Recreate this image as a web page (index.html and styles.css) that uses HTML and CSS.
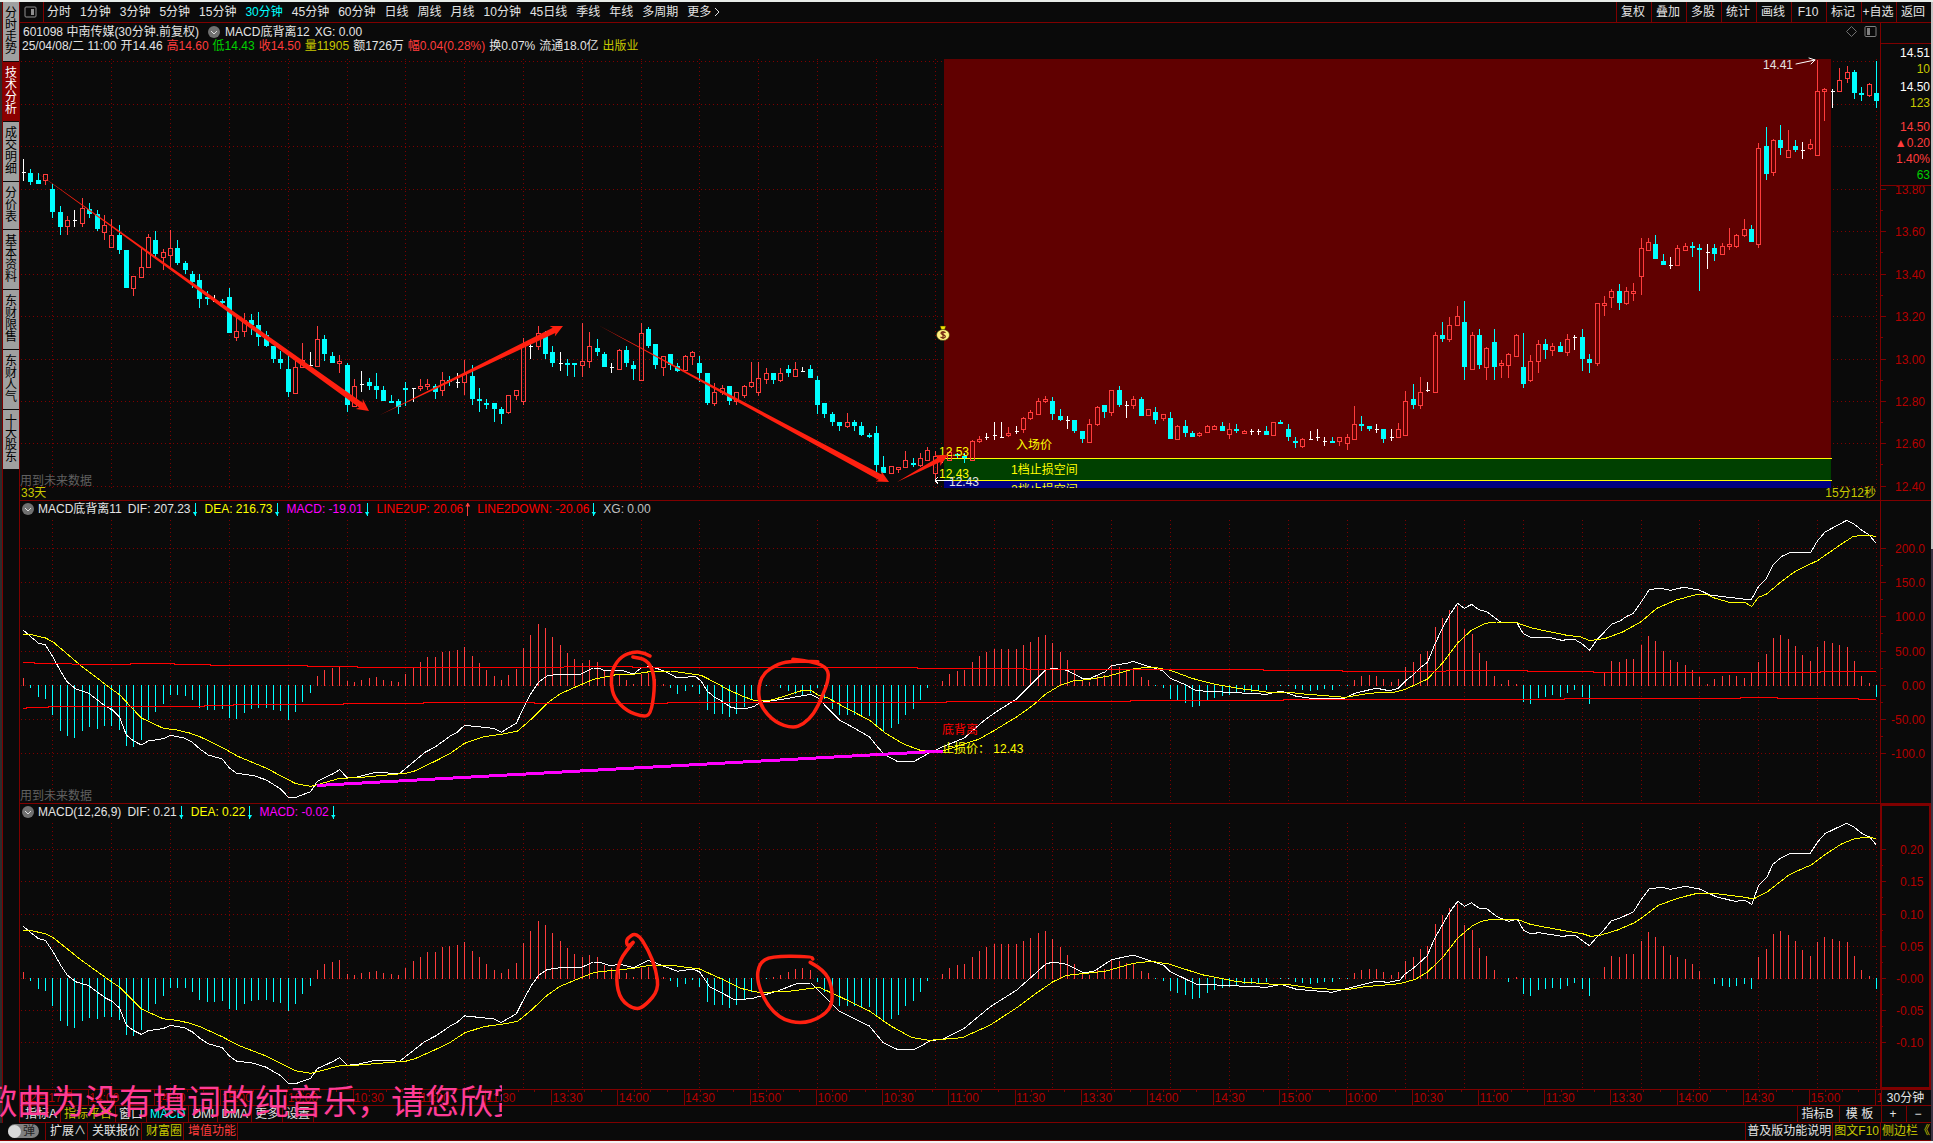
FILE: index.html
```html
<!DOCTYPE html>
<html lang="zh-CN">
<head>
<meta charset="utf-8">
<title>中南传媒 601098</title>
<link rel="stylesheet" href="styles.css">
</head>
<body>
<div class="app">
  <div class="workspace">
    <nav class="side">
      <button>分时走势</button>
      <button class="current">技术分析</button>
      <button>成交明细</button>
      <button>分价表</button>
      <button>基本资料</button>
      <button>东财限售</button>
      <button>东财人气</button>
      <button>十大股东</button>
    </nav>
    <main class="content">
      <header class="toolbar">
        <button class="layout-btn" aria-label="布局"><svg width="13" height="13" viewBox="0 0 13 13"><rect x="1" y="1" width="11" height="10" rx="1" fill="none" stroke="#909090"/><rect x="7" y="3" width="3" height="6" fill="#909090"/></svg></button>
        <div class="periods">
          <button>分时</button><button>1分钟</button><button>3分钟</button><button>5分钟</button><button>15分钟</button><button class="active">30分钟</button><button>45分钟</button><button>60分钟</button><button>日线</button><button>周线</button><button>月线</button><button>10分钟</button><button>45日线</button><button>季线</button><button>年线</button><button>多周期</button><button class="more">更多<svg width="6" height="10" viewBox="0 0 6 10"><path d="M1 1l4 4-4 4" fill="none" stroke="#e0e0e0"/></svg></button>
        </div>
        <div class="tools">
          <button>复权</button><button>叠加</button><button>多股</button><button>统计</button><button>画线</button><button>F10</button><button>标记</button><button>+自选</button><button>返回</button>
        </div>
      </header>

      <div class="panels">
        <section class="panel">
          <div class="plot-col">
            <div class="head head-main">
              <div class="line">
                <span>601098 中南传媒(30分钟.前复权)</span>
                <svg class="drop" viewBox="0 0 12 12"><circle cx="6" cy="6" r="6" fill="#707070"/><path d="M3 5l3 3 3-3" fill="none" stroke="#ddd"/></svg>
                <span>MACD底背离12</span><span>XG: 0.00</span>
                <span class="corner"><svg width="11" height="11" viewBox="0 0 11 11"><path d="M5.500.5l5 5-5 5-5-5z" fill="none" stroke="#707070"/></svg><svg width="13" height="12" viewBox="0 0 13 12"><rect x="1" y=".5" width="11" height="10" rx="1" fill="none" stroke="#808080"/><rect x="3" y="2" width="3" height="7" fill="#808080"/></svg></span>
              </div>
              <div class="line quote-line">
                <span>25/04/08/二 11:00</span><span>开14.46</span><span class="up">高14.60</span><span class="down">低14.43</span><span class="up">收14.50</span><span class="gold">量11905</span><span>额1726万</span><span class="up">幅0.04(0.28%)</span><span>换0.07%</span><span>流通18.0亿</span><span class="gold">出版业</span>
              </div>
            </div>
            <svg class="plot" id="price"></svg>
          </div>
          <div class="axis-col">
            <svg class="axis" id="price-axis"></svg>
            <div class="quotes">
              <div class="pair"><span>14.51</span><span class="gold">10</span></div>
              <div class="pair"><span>14.50</span><span class="gold">123</span></div>
              <div class="pair last"><span class="up">14.50</span><span class="up">▲0.20</span><span class="up">1.40%</span><span class="down">63</span></div>
            </div>
          </div>
        </section>

        <section class="panel">
          <div class="plot-col">
            <div class="head">
              <div class="line indicators">
                <svg class="drop" viewBox="0 0 12 12"><circle cx="6" cy="6" r="6" fill="#707070"/><path d="M3 5l3 3 3-3" fill="none" stroke="#ddd"/></svg>
                <span>MACD底背离11</span>
                <span>DIF: 207.23<i class="dn"></i></span><span class="dea">DEA: 216.73<i class="dn"></i></span><span class="macd">MACD: -19.01<i class="dn"></i></span><span class="band">LINE2UP: 20.06<i class="rise"></i></span><span class="band">LINE2DOWN: -20.06<i class="dn"></i></span><span class="dim">XG: 0.00</span>
              </div>
            </div>
            <svg class="plot" id="macd-a"></svg>
          </div>
          <div class="axis-col"><svg class="axis" id="macd-a-axis"></svg></div>
        </section>

        <section class="panel">
          <div class="plot-col">
            <div class="head">
              <div class="line indicators">
                <svg class="drop" viewBox="0 0 12 12"><circle cx="6" cy="6" r="6" fill="#707070"/><path d="M3 5l3 3 3-3" fill="none" stroke="#ddd"/></svg>
                <span>MACD(12,26,9)</span>
                <span>DIF: 0.21<i class="dn"></i></span><span class="dea">DEA: 0.22<i class="dn"></i></span><span class="macd">MACD: -0.02<i class="dn"></i></span>
              </div>
            </div>
            <svg class="plot" id="macd-b"></svg>
          </div>
          <div class="axis-col selected"><svg class="axis" id="macd-b-axis"></svg></div>
        </section>
      </div>

      <div class="time-row">
        <svg class="times" id="times"></svg>
        <button class="period-label">30分钟</button>
      </div>

      <div class="tabs">
        <div class="tab-set">
          <button>指标A</button><button class="gold">指标平台</button><button>窗口</button><button class="active">MACD</button><button>DMI</button><button>DMA</button><button>更多</button><button>设置</button>
        </div>
        <div class="tab-end"><button>指标B</button><button>模 板</button><button class="zoom">+</button><button class="zoom">−</button></div>
      </div>
    </main>
  </div>

  <footer class="status">
    <button class="toggle" aria-label="弹幕"><span class="knob"></span>弹</button>
    <div class="status-set"><button>扩展∧</button><button>关联报价</button><button class="gold">财富圈</button><button class="up">增值功能</button></div>
    <div class="status-end"><a href="#">普及版功能说明</a><a href="#" class="gold">图文F10</a><a href="#" class="gold">侧边栏《</a></div>
  </footer>
  <div class="lyric"><span>歌曲为没有填词的纯音乐，请您欣赏</span></div>
</div>
<script src="charts.js"></script>
</body>
</html>
```
FILE: styles.css
```css
* { box-sizing: border-box; }
body {
  margin: 0;
  background: #0a0a0a;
  color: #e4e4e4;
  font: 12px/14px "Liberation Sans", "Noto Sans CJK SC", sans-serif;
}
button {
  margin: 0;
  padding: 0;
  border: 0;
  background: none;
  color: inherit;
  font: inherit;
  white-space: nowrap;
  cursor: pointer;
}
a { color: inherit; text-decoration: none; }
svg { display: block; }
.gold { color: #c8c800; }
.up { color: #ff3c3c; }
.down { color: #00d000; }

.app {
  position: relative;
  display: flex;
  flex-direction: column;
  min-height: 100vh;
  border-top: 2px solid #e8ece8;
  border-bottom: 2px solid #f4f4f4;
}
.app::after {
  content: "";
  position: absolute;
  top: 0;
  right: 0;
  bottom: 0;
  width: 2px;
  background: linear-gradient(#c4c4c4 48%, #3c3444 48%);
}
.workspace { flex: 1; display: grid; grid-template-columns: 20px minmax(0, 1fr); }

.side {
  display: flex;
  flex-direction: column;
  border-left: 2px solid #2c2c2c;
  border-right: 1px solid #7f0000;
  box-shadow: inset 1px 0 #7f0000;
  padding-left: 1px;
}
.side button {
  padding: 5px 2px 6px;
  border-bottom: 1px solid #0a0a0a;
  background: #a0a0a0;
  color: #000;
  line-height: 12px;
  white-space: normal;
  word-break: break-all;
}
.side .current { background: #8b0000; color: #fff; }

.content { display: flex; flex-direction: column; min-width: 0; padding-right: 2px; }
.toolbar { display: flex; height: 21px; border-bottom: 1px solid #7f0000; }
.layout-btn { width: 24px; padding-left: 4px; border-right: 1px solid #7f0000; }
.periods { flex: 1; display: flex; gap: 9px; padding-left: 3px; }
.periods .active { color: #00ffff; }
.more { display: flex; align-items: center; gap: 3px; }
.tools { display: flex; }
.tools button { width: 35px; padding-right: 2px; border-left: 1px solid #7f0000; }

.panels { flex: 1; display: grid; grid-template-rows: 478fr 303fr 286fr; }
.panel {
  display: grid;
  grid-template-columns: minmax(0, 1fr) 51px;
  min-height: 0;
  border-bottom: 1px solid #7f0000;
}
.plot-col { display: flex; flex-direction: column; min-width: 0; }
.axis-col { position: relative; border-left: 1px solid #7f0000; }
.axis-col.selected { border: 2px solid #7f0000; }
.head { padding-top: 1px; }
.head-main { padding-top: 2px; }
.line { display: flex; align-items: center; height: 14px; gap: 5px; padding-left: 3px; white-space: nowrap; }
.quote-line { gap: 4px; padding-left: 2px; }
.drop { width: 12px; height: 12px; margin-left: 4px; }
.corner { display: flex; gap: 7px; margin-left: auto; padding-right: 3px; }
.indicators { gap: 6px; padding-left: 2px; }
.indicators .drop { margin: 0 -2px 0 0; }
.indicators span { display: flex; align-items: center; gap: 1px; }
.indicators i { position: relative; width: 7px; height: 13px; color: #00ffff; background: linear-gradient(currentColor, currentColor) 3px 0 / 1px 13px no-repeat; }
.indicators i::after { content: ""; position: absolute; left: 1px; bottom: 0; width: 5px; height: 4px; background: currentColor; clip-path: polygon(0 0, 100% 0, 50% 100%); }
.indicators .rise { color: #ff3c3c; }
.indicators .rise::after { top: 0; bottom: auto; clip-path: polygon(50% 0, 100% 100%, 0 100%); }
.indicators .dea { color: #ffff00; }
.indicators .macd { color: #ff00ff; }
.indicators .band { color: #ff0000; }
.indicators .dim { color: #c0c0c0; }
.plot { flex: 1; width: 100%; height: 0; min-height: 0; }
.axis { width: 100%; height: 0; min-height: 100%; }
.quotes {
  position: absolute;
  inset: 0 0 auto 0;
  padding: 22px 1px 2px 0;
  border-bottom: 1px solid #7f0000;
  background: linear-gradient(#7f0000, #7f0000) 0 20px / 100% 1px no-repeat #0a0a0a;
  color: #fff;
  line-height: 16px;
  text-align: right;
}
.pair { display: flex; flex-direction: column; margin-bottom: 2px; }
.pair.last { margin: 8px 0 0; }

.time-row { display: grid; grid-template-columns: minmax(0, 1fr) 50px; height: 16px; border-bottom: 1px solid #7f0000; }
.times { width: 100%; height: 15px; }
.period-label { padding-right: 2px; border-left: 1px solid #7f0000; }
.tabs { display: flex; justify-content: space-between; height: 17px; border-bottom: 1px solid #7f0000; }
.tab-set, .tab-end, .status-set, .status-end { display: flex; }
.tab-set { padding-left: 2px; }
.tab-set button { padding: 0 3px; border-right: 1px solid #7f0000; }
.tab-set .active { color: #00ffff; }
.tab-end button { width: 42px; padding-right: 2px; border-left: 1px solid #7f0000; }
.tab-end .zoom { width: 25px; }

.status { display: flex; align-items: stretch; height: 18px; padding-right: 2px; border-bottom: 1px solid #7f0000; line-height: 17px; }
.toggle { display: flex; align-items: center; justify-content: space-between; width: 31px; height: 14px; margin: 1px 6px 0 8px; padding-right: 4px; border-radius: 7px; background: #808080; color: #222; }
.knob { width: 13px; height: 13px; border-radius: 50%; background: #d8d8d8; }
.status-set { flex: 1; border-left: 1px solid #7f0000; }
.status-set button { padding: 0 1px 0 4px; border-right: 1px solid #7f0000; }
.status-end a { padding: 0 1px; border-left: 1px solid #7f0000; }

.lyric {
  position: absolute;
  left: 0;
  bottom: 20px;
  width: 502px;
  height: 42px;
  overflow: hidden;
  color: #ff3c96;
  font: 400 34px/42px "Noto Sans CJK SC", sans-serif;
  white-space: nowrap;
  pointer-events: none;
}
.lyric span { margin-left: -17px; }

.plot text, .axis text, .times text { font: 12px "Liberation Sans", "Noto Sans CJK SC", sans-serif; }
```
FILE: charts.js
```js
// Series values are stored in thirds of a chart unit, relative to each block's base line.
const RED = '#ff3c3c', CYAN = '#00ffff', GRID = '#7f0000', PEN = '#ff2010', BG = '#0a0a0a';
const BAR_X = i => 23.5 + 7.353 * i;

// type, high, body top, body bottom, low  (r = rising, c = falling, w = unchanged)
const CANDLES = [
  [0, 'w477 517 517 545|c507 521 546 557|c521 540 552 552|r522 522 542 557|c552 567 636 654|c618 636 681 705|r650 660 678 705|w630 662 662 681|r594 625 671 681|c609 629 642 654|c630 642 687 693|r645 676 696 720|r657 706 741 741|c675 705 750 762|c750 750 864 864|r828 828 866 890|r744 801 831 831|r702 711 803 803|c693 720 762 775|r747 756 773 812|r690 744 765 805|c720 744 789 795|c783 789 812 822|c813 822 846 864|c822 840 897 924|c873 892 897 915|w885 903 903 908|c897 903 909 921|c864 891 999 999|r948 993 1013 1025|r939 960 995 1011|c942 960 975 1005|c936 975 1011 1038|c993 1005 1038 1043|c1038 1038 1077 1089|c1055 1077 1089 1107|c1066 1107 1176 1191|r1070 1102 1179 1179|r1029 1080 1103 1103|w1056 1096 1096 1100|r978 1018 1098 1101|c1005 1017 1062 1083|c1056 1068 1089 1089|r1065 1083 1091 1119|c1089 1095 1215 1236|r1137 1158 1218 1221|w1113 1153 1153 1176|c1134 1146 1158 1170|c1119 1158 1170 1197|c1158 1170 1203 1203|c1185 1203 1209 1209|c1197 1203 1221 1243'],
  [280, 'c306 324 330 380|w325 325 325 368|r297 319 325 334|r297 313 319 331|c313 319 336 357|r276 300 332 350|c288 300 306 318|w279 306 306 324|r240 282 308 346|c255 288 357 375|c324 357 363 396|c357 369 375 387|c369 369 387 426|c381 387 402 432|r345 346 398 402|r331 331 347 362|r174 198 365 375|w190 199 199 237|r138 160 200 210|c153 160 222 237|c198 216 249 261|w216 250 250 273|c237 249 255 288|c249 249 255 293|r129 244 257 293|r156 199 245 266|c178 204 216 228|c216 222 261 261|w249 262 262 279|r207 210 269 272|c198 210 249 261|c243 255 267 300|r129 160 302 302|c141 147 198 204|c192 192 255 267|r228 229 263 288|c222 222 255 272|c249 258 273 278|r225 229 270 272|r213 217 230 255|c228 249 279 306|c279 279 369 375|r309 336 371 380|r315 324 338 345|c318 318 363 375|r336 336 365 375|r315 319 347 356|r246 307 320 324|r246 295 338 350|r264 279 297 312|c279 279 300 312|r264 280 302 306|c255 267 279 293|r246 268 290 290|w261 274 274 276|c255 267 294 294|c288 300 375 402|c369 369 402 414|c396 402 426 438|c426 426 438 453|r399 426 440 446|c420 426 438 453|c426 438 465 470|c459 465 471 476|c438 459 555 579|c528 561 579 579|r558 560 580 580|r562 562 569 579|r513 541 563 563|c534 549 555 561|r519 535 557 561|r501 511 542 545|r513 530 580 600'],
  [300, 'w470 470 470 489|r455 457 482 482|c459 463 468 474|c459 468 475 489|r420 423 482 482|r408 418 425 431|w399 412 412 422|w366 406 406 422|w366 412 412 412|r381 401 407 412|w378 394 394 404|r351 354 389 399|r330 337 356 360|r294 304 344 344|r288 297 304 309|c291 303 342 360|c327 348 360 365|w348 360 360 387|c360 360 393 399|c393 393 417 430|r357 373 426 430|r318 321 374 378|c315 315 336 354|r270 270 338 348|c258 270 315 321|w303 316 316 354|r288 297 317 327|c291 297 348 348|r327 328 346 348|c321 336 360 372|r342 342 356 365|c336 354 417 417|r375 379 419 419|c360 378 399 411|c393 399 411 411|r396 400 407 411|r375 379 396 399|r375 379 389 389|c366 378 393 393|r369 387 402 417|c372 387 393 399|r390 394 401 404|w387 395 395 405|w387 395 395 405|c378 393 405 405|r366 367 407 407|c360 366 372 372|c372 387 411 423|c411 423 429 444|r414 418 440 444|w393 418 418 419|w387 412 412 424|w411 424 424 438|c411 423 429 429|r411 412 425 438|r402 412 431 450|r318 373 419 419|c348 372 378 393|c378 378 387 393|w372 387 387 399|c387 387 417 429|w387 412 412 424|r369 388 413 413|r273 304 407 407|c252 297 315 327|r231 277 317 327|w246 271 271 276|r96 105 278 278'],
  [40, 'c846 885 897 906|r831 856 899 906|r798 828 857 857|c783 846 981 1020|r876 885 989 989|c867 885 975 987|r921 925 983 1020|c867 906 981 1020|r960 970 977 1014|r939 943 977 1014|r882 885 950 950|c879 981 1032 1044|r945 964 1022 1026|r900 913 965 999|c897 912 930 957|r909 919 932 948|c906 918 936 936|r882 898 938 948|w885 892 892 930|c867 891 957 993|c942 957 969 999|r790 790 971 980|r768 790 797 828|r747 754 773 804|c732 753 789 810|r741 754 791 795|r729 754 761 783|r594 625 710 765|r594 607 632 632|c585 612 657 657|c642 663 675 675|w651 676 676 687|r615 625 677 677|r609 619 632 632|c606 618 624 651|c612 624 630 753|w612 637 637 687|c612 624 642 663|r609 619 644 644|r564 613 620 630|r582 586 620 624|r537 568 587 591|c555 567 606 606|r309 325 614 624|c261 318 402 420|r297 301 398 408|c255 300 324 345|r270 331 353 353|c300 318 330 336|w306 331 331 357|r297 313 326 330|r60 154 347 347|r144 148 155 243|w147 154 154 204|r84 121 155 155|r78 97 116 131|c90 96 159 177|c141 159 165 183|r129 133 167 171|c63 159 183 204']
];

// zero level, bar tips
const BARS = [
  [616, '597 627 654 660 708 756 771 777 756 744 750 741 741 753 801 804 783 723 699 675 648 648 651 663 687 693 693 690 717 720 702 690 687 687 693 696 723 699 669 642 591 573 567 560 606 609 603 597 594 603 606 609 585 564 549 534 534 519 516 513 504 531 552 573 591 603 588 570 507 468 435 447 474 498 522 540 552 543 549 576'],
  [256, '225 228 243 254 225 222 240 254 267 285 276 264 285 333 345 345 354 345 324 303 285 261 256 267 276 285 288 282 267 300 330 348 348 348 351 351 378 395 387 375 348 330 303 267 256 246 225 216 213 189 171 159 150 150 150 150 138 129 114 108 132 159 183 213 246 249 231 228 201 204 210 210 234 243 260'],
  [106, '117 150 156 162 173 171 154 147 140 136 130 128 127 122 121 106 111 108 120 123 126 123 120 121 111 108 91 81 78 79'],
  [556, '540 549 540 504 489 465 456 384 357 333 321 390 405 462 486 531 555 543 555 609 615 597 594 588 594 582 573 594 615 556 522 486 489 480 480 438 411 426 456 483 489 498 513 534 555 540 531 528 531 537 522 489 465 417 408 420 441 468 486 444 426 432 438 444 486 531 552 594']
];

// blocks of [x origin, x scale, y origin, "x,y ..."]
const DIF_LEFT = [0, 2.376, 480, '55,450 74,471 91,489 108,495 127,534 145,576 160,606 180,627 210,639 250,678 267,690 284,711 300,765 318,783 336,795 352,783 388,776 405,766 438,774 457,787 475,807 495,825 528,837 545,864 562,880 603,887 633,900 667,927 686,953 703,952 738,935 754,904 790,882 807,869 825,893 845,892 890,878 950,880 1010,817 1035,800 1070,768 1085,758 1104,736 1172,745 1191,757 1227,729 1245,681 1262,640 1280,606 1300,588 1330,582 1380,582 1410,564'];
const DEA_LEFT = [0, 2.376, 480, '55,463 75,464 108,474 127,487 160,522 190,555 240,603 265,627 285,645 318,690 336,714 388,745 420,750 450,759 475,770 530,804 565,829 632,864 686,900 703,911 738,919 760,912 807,895 850,893 965,880 985,873 1035,843 1070,820 1104,790 1150,770 1195,762 1230,753 1262,718 1300,670 1330,642 1360,625 1410,598'];
const DIF_A = [DIF_LEFT,
  [600, 2.8, 600, '0,205 12,212 60,211 94,222 117,202 145,200 180,213 217,234 255,230 268,230 283,243 300,273 320,291 345,306 365,321 380,325 410,325 430,320 450,307 520,296 590,283 610,294 670,360 715,386 755,411 775,438 795,462 832,484 880,484 920,460 960,440 1020,414 1045,390 1075,362 1107,337 1165,298 1205,255 1248,210 1268,205 1308,211 1350,235 1370,236 1415,215 1432,197 1475,190'],
  [600, 1.96, 650, '1045,34 1073,48 1104,63 1118,85 1150,106 1168,122 1210,125 1306,133 1335,123 1365,139 1395,145 1455,147 1480,130 1520,115 1540,119'],
  [1380, 2.835, 500, '0,569 30,571 52,565 72,543 95,524 117,501 135,486 157,429 180,378 197,345 220,310 239,325 260,313 280,329 303,335 342,366 388,368 406,401 427,412 480,412 515,421 550,417 575,433 594,451 617,417 657,373 680,363 700,349 718,340 741,305 763,270 790,264 825,271 860,262 905,270 935,285 1052,300 1073,260 1095,236 1115,194 1137,170 1160,159 1221,157 1240,123 1262,96 1323,61 1345,73 1365,90 1387,105 1406,129']];
const DEA_A = [DEA_LEFT,
  [600, 2.8, 600, '0,234 50,223 94,223 145,214 200,213 283,226 320,246 360,270 400,289 430,301 470,303 500,294 535,282 570,270 590,270 610,285 640,295 680,319 755,361 800,400 850,432 900,452 960,453 1060,418 1100,394 1165,352 1210,318 1248,282 1290,255 1325,243 1370,238 1425,228 1500,205'],
  [600, 1.96, 650, '1085,52 1118,61 1160,85 1200,101 1250,115 1310,127 1345,126 1380,132 1460,142 1500,132'],
  [1380, 2.835, 500, '0,577 40,577 72,568 135,537 180,486 220,429 260,390 300,370 330,366 390,369 427,383 480,395 530,406 570,411 594,422 640,415 690,395 740,365 785,325 840,300 900,283 925,283 950,295 990,307 1035,308 1054,319 1073,292 1095,283 1140,243 1180,212 1240,182 1300,138 1340,110 1370,105 1406,109']];
const DIF_B = [
  [600, 1.96, 650, '0,937 20,947 40,943 66,953 95,931 152,964 180,957 195,965 215,1010 265,1050 300,1045 350,1022 385,1001 413,999 468,1083 528,1128 555,1178 585,1200 617,1198 648,1172 672,1167 714,1135 765,1070 817,1020 874,942 888,936 915,943 948,968 968,964 1003,929 1045,915 1104,945 1118,965 1168,1002 1306,1012 1335,1003 1365,1018 1435,1027 1470,1013 1520,994 1545,997'],
  [1400, 2.942, 800, '0,540 16,521 40,504 80,467 103,413 147,335 170,304 190,319 210,308 233,325 255,326 285,350 320,364 345,358 363,390 383,401 410,398 475,409 515,406 557,437 585,405 600,390 622,362 650,353 687,335 710,298 733,267 770,262 795,268 840,259 881,267 930,290 985,304 1015,301 1035,313 1055,256 1080,230 1097,193 1120,174 1150,160 1207,160 1228,127 1250,101 1313,70 1335,81 1360,101 1383,112 1400,134']];
const DEA_B = [
  [600, 1.96, 650, '0,965 66,955 100,945 150,948 195,957 240,988 275,1015 310,1027 365,1025 430,1012 470,1040 528,1083 570,1128 610,1162 645,1171 710,1163 765,1125 817,1073 850,1035 888,995 915,976 990,964 1045,940 1080,934 1115,942 1180,974 1250,995 1320,1003 1350,1004 1400,1015 1460,1020 1500,1010'],
  [1400, 2.942, 800, '0,551 45,538 80,517 125,473 170,414 212,378 240,364 270,358 345,358 383,373 460,388 540,402 560,409 585,407 640,390 690,368 710,355 760,316 820,294 870,281 930,281 1015,292 1040,297 1080,276 1145,224 1190,203 1210,195 1250,164 1300,131 1340,115 1385,112 1400,116']];
const UPPER = [[0, 2.376, 480, '55,547 82,550 170,552 310,550 415,553 500,555 730,559 850,562 1340,560 1425,560'],
  [600, 2.8, 600, '90,202 888,205 1195,208'], [600, 1.96, 650, '1300,62 1455,65'],
  [1380, 2.835, 500, '0,514 187,511 417,514 604,517 1250,514 1406,514']];
const LOWER = [[0, 2.376, 480, '55,685 64,682 116,679 485,677 555,674 815,671 1007,667 1270,670 1425,670'],
  [600, 2.8, 600, '190,307 970,304 1485,301'], [600, 1.96, 650, '1340,149'],
  [1380, 2.835, 500, '0,598 522,595 1021,592 1127,595 1355,598 1406,598']];
const PEN_A = [
  [[600, 2.8, 600, '140,168 125,158 95,155 60,168 35,205 30,250 40,295 75,333 120,350 142,344 153,270 150,215 130,178 92,171']],
  [[600, 2.8, 600, '540,178 600,185 638,205 640,240 622,290 600,340 570,372 540,385 490,367 450,320 442,270 455,222 500,190 540,183 610,185']]];
const PEN_B = [
  [[600, 1.96, 650, '65,877 55,893 50,868 72,846 95,900 110,960 115,1020 90,1065 70,1081 40,1050 31,990 38,930 65,877']],
  [[600, 1.96, 650, '412,937 440,960 455,1010 455,1070 430,1105 395,1121 355,1108 325,1060 307,990 312,940 335,918 414,919 417,927']]];

const points = blocks => blocks.flatMap(([x0, sx, y0, s]) =>
  s.split(' ').map(p => { const [a, b] = p.split(',').map(Number); return [x0 + a / sx, y0 + b / 3]; }));
const stepped = pts => pts.flatMap((p, i) => i ? [[p[0], pts[i - 1][1]], p] : [p]);
const bars = BARS.flatMap(([zero, s]) => s.split(' ').map(v => (v - zero) / 3));

// Maps chart units to the current size of an SVG element.
function surface(id, left, top, width, height) {
  const el = document.getElementById(id), box = el.getBoundingClientRect();
  const kx = box.width / width, ky = box.height / height;
  const X = x => (x - left) * kx, Y = y => (y - top) * ky;
  let out = '';
  const fx = x => Math.floor(X(x)), fy = y => Math.floor(Y(y) + .01);
  const s = {
    rect(x, y, x2, y2, fill) { out += `<rect x="${fx(x)}" y="${fy(y)}" width="${fx(x2) - fx(x)}" height="${Math.max(1, fy(y2) - fy(y))}" fill="${fill}"/>`; },
    hline(x, x2, y, c, dash) { out += `<path d="M${fx(x)} ${fy(y) + .5}H${fx(x2)}" stroke="${c}" ${dash ? 'stroke-dasharray="1 3"' : ''}/>`; },
    vline(x, y, y2, c, dash) { out += `<path d="M${fx(x) + .5} ${fy(y)}V${fy(y2)}" stroke="${c}" ${dash ? 'stroke-dasharray="1 3"' : ''}/>`; },
    bar(x, y, y2, c) { out += `<rect x="${fx(x)}" y="${fy(y)}" width="1" height="${Math.max(1, fy(y2) - fy(y))}" fill="${c}"/>`; },
    poly(pts, c, w = 1, crisp = true) { out += `<polyline points="${pts.map(p => X(p[0]).toFixed(1) + ',' + Y(p[1]).toFixed(1)).join(' ')}" fill="none" stroke="${c}" stroke-width="${w}" stroke-linejoin="round" ${crisp ? 'shape-rendering="crispEdges"' : 'stroke-linecap="round"'}/>`; },
    curve(pts, c, w) {
      let d = `M${X(pts[0][0])} ${Y(pts[0][1])}`;
      for (let i = 1; i < pts.length - 1; i++) d += `Q${X(pts[i][0])} ${Y(pts[i][1])} ${X((pts[i][0] + pts[i + 1][0]) / 2)} ${Y((pts[i][1] + pts[i + 1][1]) / 2)}`;
      const e = pts[pts.length - 1];
      out += `<path d="${d}L${X(e[0])} ${Y(e[1])}" fill="none" stroke="${c}" stroke-width="${w}" stroke-linecap="round"/>`;
    },
    arrow(x1, y1, x2, y2, w) {
      const ax = X(x1), ay = Y(y1), bx = X(x2), by = Y(y2), len = Math.hypot(bx - ax, by - ay);
      const ux = (bx - ax) / len, uy = (by - ay) / len, n = (d, o) => `${(bx - ux * d - uy * o).toFixed(1)},${(by - uy * d + ux * o).toFixed(1)}`;
      out += `<polygon points="${ax},${ay} ${n(10, w / 2)} ${n(12, 6)} ${bx},${by} ${n(12, -6)} ${n(10, -w / 2)}" fill="${PEN}"/>`;
    },
    text(x, y, t, c, anchor = 'start') { out += `<text x="${X(x)}" y="${Y(y) + 4}" fill="${c}" text-anchor="${anchor}">${t}</text>`; },
    raw(x, y, m) { out += `<g transform="translate(${X(x)} ${Y(y)})">${m}</g>`; },
    candle(i, type, h, t, b, l) {
      const x = fx(BAR_X(i)), c = { r: RED, c: CYAN, w: '#ffffff' }[type];
      h = fy(h); t = fy(t); b = fy(b); l = fy(l);
      if (type === 'r') {
        b = Math.max(b, t + 2);
        if (t > h) out += `<rect x="${x}" y="${h}" width="1" height="${t - h}" fill="${c}"/>`;
        if (l > b) out += `<rect x="${x}" y="${b}" width="1" height="${l - b}" fill="${c}"/>`;
        out += `<rect x="${x - 1.5}" y="${t + .5}" width="4" height="${b - t}" fill="none" stroke="${c}"/>`;
      } else {
        out += `<rect x="${x}" y="${h}" width="1" height="${Math.max(1, l - h)}" fill="${c}"/>`;
        out += type === 'c' ? `<rect x="${x - 2}" y="${t}" width="5" height="${Math.max(2, b - t)}" fill="${c}"/>`
          : `<rect x="${x - 1}" y="${t}" width="4" height="1" fill="${c}"/>`;
      }
    },
    done() { el.innerHTML = out; }
  };
  return s;
}

function grid(s, levels, top, bottom) {
  levels.forEach(y => s.hline(21, 1877, y, GRID, true));
  for (let k = 0; k < 32; k++) s.vline(BAR_X(4 + 8 * k), top, bottom, GRID, true);
}

function drawPrice() {
  const s = surface('price', 20, 53, 1860, 447);
  grid(s, [61, 104, 146, 189, 231, 274, 316, 359, 401, 443, 486], 59, 488);
  s.rect(944, 59, 1831, 458, '#600000');
  s.rect(944, 458, 1831, 480, '#004000');
  s.rect(944, 480, 1831, 488, '#000080');
  s.hline(940, 1832, 458, '#ffff00');
  s.hline(944, 1832, 480, '#ffff00');
  let i = 0;
  for (const [base, rows] of CANDLES) for (const row of rows.split('|')) {
    const v = row.slice(1).split(' ').map(n => base + n / 3);
    s.candle(i++, row[0], ...v);
  }
  s.text(1016, 445, '入场价', '#ffff00');
  s.text(1011, 470, '1档止损空间', '#ffff00');
  s.text(1011, 490, '2档止损空间', '#ffff00');
  s.rect(1000, 488, 1100, 499, BG);
  s.text(939, 452, '12.53', '#ffff00');
  s.text(939, 474, '12.43', '#ffff00');
  s.text(949, 482, '12.43', '#e4e4e4');
  s.poly([[935, 480.5], [952, 480.5]], '#fff');
  s.poly([[938, 477], [935, 480], [938, 484]], '#fff');
  s.text(1763, 65, '14.41', '#e4e4e4');
  s.poly([[1796, 64], [1815, 60]], '#fff', 1, false);
  s.poly([[1809, 58], [1815, 60], [1811, 64]], '#fff', 1, false);
  s.raw(936, 325, '<path d="M4 1h6l-1.500 4h-3z" fill="#f0e000" stroke="#302000" stroke-width=".5"/><ellipse cx="7" cy="10" rx="6.500" ry="5.500" fill="#fff080" stroke="#403000" stroke-width=".6"/><path d="M9.500 7.800C8 6.500 5 6.700 5 8.300S9.300 9.500 9.300 11.500 6 13.300 4.500 12M7 6v8" fill="none" stroke="#702010" stroke-width="1.200"/>');
  s.arrow(32, 169, 369, 411, 6);
  s.arrow(380, 415, 563, 326, 6);
  s.arrow(598, 325, 889, 482, 6);
  s.arrow(897, 482, 948, 455, 5);
  s.text(20, 481, '用到未来数据', '#606060');
  s.text(21, 493, '33天', '#c8c800');
  s.text(1876, 493, '15分12秒', '#c8c800', 'end');
  s.done();
}

function histogram(s, values, zero) {
  values.forEach((v, i) => { if (Math.abs(v) > .2) v < 0 ? s.bar(BAR_X(i), zero + v, zero + 1, RED) : s.bar(BAR_X(i), zero, zero + v, CYAN); });
}

function drawMacdA() {
  const s = surface('macd-a', 20, 516, 1860, 287);
  grid(s, [548, 582, 616, 651, 685, 719, 753], 520, 802);
  histogram(s, bars, 685);
  s.poly(points(DIF_A), '#fff');
  s.poly(points(DEA_A), '#ffff00');
  s.poly(stepped(points(UPPER)), '#ff0000');
  s.poly(stepped(points(LOWER)), '#ff0000');
  s.text(942, 730, '底背离', '#ff0000');
  s.text(942, 749, '止损价： 12.43', '#ffff00');
  s.poly([[317, 785.5], [943, 751]], '#ff00ff', 3);
  PEN_A.forEach(p => s.curve(points(p), PEN, 3.5));
  s.text(20, 796, '用到未来数据', '#606060');
  s.done();
}

function drawMacdB() {
  const s = surface('macd-b', 20, 819, 1860, 270);
  grid(s, [849, 881, 914, 946, 978, 1010, 1042], 823, 1088);
  const own = { 102: -1, 103: -3, 104: -6, 105: -9, 106: -10, 107: -8, 108: 4, 109: 14, 201: 0, 202: 4, 203: -1, 229: 0, 230: 6, 231: 8, 232: 9, 233: 8, 234: 6, 235: 11 };
  histogram(s, bars.map((v, i) => i in own ? own[i] : v * .94), 978);
  const fit = pts => pts.map(([x, y]) => [x, 978.3 + (y - 685.3) * .94]);
  s.poly([...fit(points([DIF_LEFT])), ...points(DIF_B)], '#fff');
  s.poly([...fit(points([DEA_LEFT])), ...points(DEA_B)], '#ffff00');
  PEN_B.forEach(p => s.curve(points(p), PEN, 3.5));
  s.done();
}

function drawAxis(id, top, height, levels, labels) {
  const s = surface(id, 1881, top, 50, height);
  levels.forEach((y, i) => {
    s.hline(1881, 1886, y, GRID);
    if (i < levels.length - 1) s.hline(1881, 1883, (y + levels[i + 1]) / 2, GRID);
    s.text(1925, y + .5, labels[i], '#b40000', 'end');
  });
  s.done();
}

function drawTimes() {
  const s = surface('times', 20, 1090, 1861, 15);
  const day = ['10:00', '10:30', '11:00', '11:30', '13:30', '14:00', '14:30', '15:00'];
  for (let k = 0; k < 29; k++) {
    const x = 22 + 66.2 * k;
    if (k) s.vline(x, 1090, 1105, GRID);
    for (let m = 1; m < 4; m++) s.vline(x + 16.5 * m, 1090, 1092, GRID);
    s.text(x + 1, 1097.5, k ? day[(k + 4) % 8] : '02月17日', '#b40000');
  }
  s.done();
}

function draw() {
  drawPrice();
  drawMacdA();
  drawMacdB();
  drawAxis('price-axis', 23, 477, [189, 231, 274, 316, 359, 401, 443, 486], ['13.80', '13.60', '13.40', '13.20', '13.00', '12.80', '12.60', '12.40']);
  drawAxis('macd-a-axis', 501, 302, [548, 582, 616, 651, 685, 719, 753], ['200.0', '150.0', '100.0', '50.00', '0.00', '-50.00', '-100.0']);
  drawAxis('macd-b-axis', 806, 281, [849, 881, 914, 946, 978, 1010, 1042], ['0.20', '0.15', '0.10', '0.05', '-0.00', '-0.05', '-0.10']);
  drawTimes();
}
draw();
window.addEventListener('resize', draw);
```
